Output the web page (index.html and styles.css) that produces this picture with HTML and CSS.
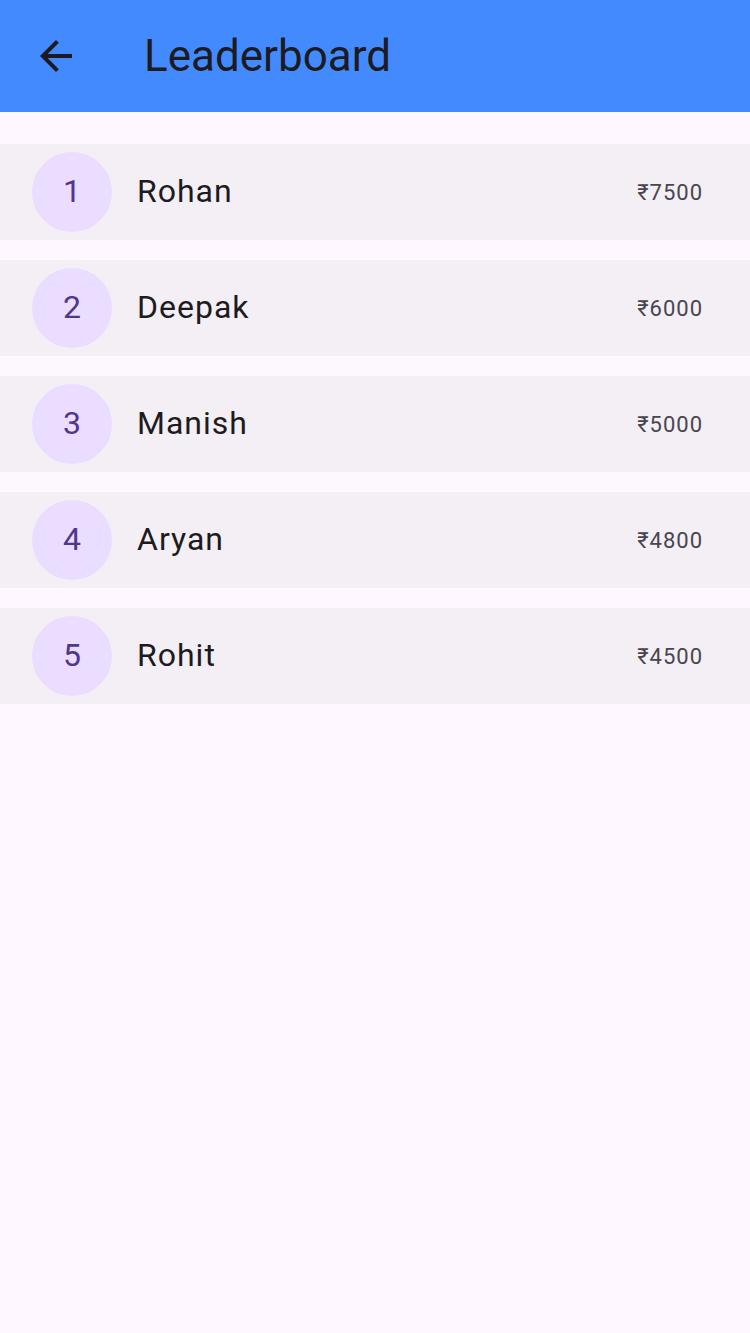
FILE: index.html
```html
<!DOCTYPE html>
<html>
<head>
<meta charset="utf-8">
<link rel="stylesheet" href="styles.css">
</head>
<body>
<header class="appbar">
  <div class="leading">
    <svg class="icon" viewBox="0 0 24 24" width="48" height="48"><path d="M20 11H7.83l5.59-5.59L12 4l-8 8 8 8 1.41-1.41L7.83 13H20v-2z" fill="#1D1B20"/></svg>
  </div>
  <h1 class="title">Leaderboard</h1>
</header>
<main class="list">
  <div class="tile"><div class="avatar">1</div><div class="name">Rohan</div><div class="amount">₹7500</div></div>
  <div class="tile"><div class="avatar">2</div><div class="name">Deepak</div><div class="amount">₹6000</div></div>
  <div class="tile"><div class="avatar">3</div><div class="name">Manish</div><div class="amount">₹5000</div></div>
  <div class="tile"><div class="avatar">4</div><div class="name">Aryan</div><div class="amount">₹4800</div></div>
  <div class="tile"><div class="avatar">5</div><div class="name">Rohit</div><div class="amount">₹4500</div></div>
</main>
</body>
</html>
```
FILE: styles.css
```css
html, body {
  margin: 0;
  padding: 0;
  background: #FEF7FF;
  font-family: Roboto, "Noto Sans", sans-serif;
}
body {
  min-height: 1333px;
}
.appbar {
  height: 112px;
  background: #448AFF;
  display: flex;
  align-items: center;
}
.leading {
  width: 112px;
  height: 112px;
  display: flex;
  align-items: center;
  justify-content: center;
}
.icon {
  display: block;
}
.title {
  margin: 0 0 0 32px;
  font-size: 44px;
  font-weight: 400;
  color: #1D1B20;
  line-height: 56px;
}
.list {
  padding-top: 32px;
  display: flex;
  flex-direction: column;
  gap: 20px;
}
.tile {
  height: 96px;
  background: #F3EFF5;
  display: flex;
  align-items: center;
  padding: 0 47px 0 32px;
}
.avatar {
  width: 80px;
  height: 80px;
  border-radius: 50%;
  background: #EADDFF;
  color: #4F378B;
  font-size: 32px;
  display: flex;
  align-items: center;
  justify-content: center;
  flex-shrink: 0;
  padding-bottom: 2px;
  box-sizing: border-box;
}
.name {
  flex: 1;
  margin-left: 25px;
  padding-bottom: 2px;
  font-size: 32px;
  letter-spacing: 1px;
  color: #1D1B20;
}
.amount {
  font-size: 22px;
  letter-spacing: 1px;
  color: #49454F;
}
```
